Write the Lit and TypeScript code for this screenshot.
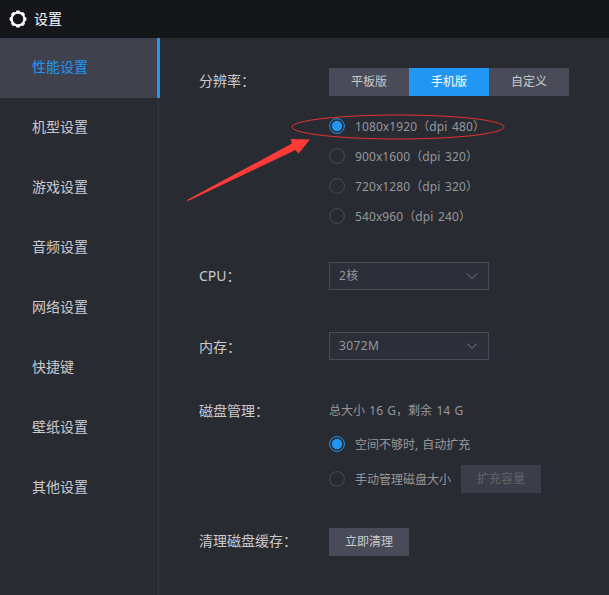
import { LitElement, html, css, svg } from "lit";
import { customElement, property, state } from "lit/decorators.js";
import { classMap } from "lit/directives/class-map.js";

@customElement("radio-option")
class RadioOption extends LitElement {
  @property({ type: Boolean }) checked = false;
  @property() label = "";
  static styles = css`
    :host { display: flex; align-items: center; height: 30px; font-size: 12px; color: #95979b; white-space: nowrap; cursor: pointer; }
    .dot { box-sizing: border-box; width: 16px; height: 16px; margin-right: 10px; flex: none; }
    .ring { fill: none; stroke: #494c58; }
    .on .ring { stroke: #2196f3; }
    .core { fill: #2196f3; }
    .text { padding-top: 1px; }
  `;
  render() {
    return html`<svg class="dot ${this.checked ? "on" : ""}" viewBox="0 0 16 16">
        <circle class="ring" cx="8" cy="8" r="7.4"></circle>
        ${this.checked ? svg`<circle class="core" cx="8" cy="8" r="5.2"></circle>` : ""}
      </svg><span class="text">${this.label}</span>`;
  }
}

@customElement("select-box")
class SelectBox extends LitElement {
  @property() value = "";
  static styles = css`
    :host { box-sizing: border-box; display: flex; align-items: center; justify-content: space-between; width: 160px; height: 28px; padding: 0 10px 0 9px; border: 1px solid #494c58; background: #2d2f38; color: #95979b; font-size: 12px; letter-spacing: 0.4px; }
    svg { width: 12px; height: 8px; fill: none; stroke: #777a82; }
  `;
  render() {
    return html`<span>${this.value}</span><svg viewBox="0 0 12 8"><path d="M1 1.5 6 6.5 11 1.5"></path></svg>`;
  }
}

@customElement("app-root")
class AppRoot extends LitElement {
  @state() active = 0;
  @state() mode = 1;
  @state() resolution = 0;
  @state() disk = 0;
  menu = ["性能设置", "机型设置", "游戏设置", "音频设置", "网络设置", "快捷键", "壁纸设置", "其他设置"];
  modes = ["平板版", "手机版", "自定义"];
  sizes = ["1080x1920（dpi 480）", "900x1600（dpi 320）", "720x1280（dpi 320）", "540x960（dpi 240）"];
  diskModes = ["空间不够时, 自动扩充", "手动管理磁盘大小"];

  static styles = css`
    :host { box-sizing: border-box; display: flex; flex-direction: column; position: relative; width: 609px; height: 595px; overflow: hidden; background: #292b32; color: #c9cacc; font: 14px/20px "Noto Sans", "Noto Sans CJK SC", sans-serif; }
    header { display: flex; align-items: center; height: 38px; padding-left: 9px; background: #15161a; color: #fff; }
    header span { padding-bottom: 1px; }
    .gear { width: 18px; height: 18px; margin-right: 7px; }
    .body { display: flex; flex: 1; }
    nav { box-sizing: border-box; width: 159px; border-right: 1px solid #363841; }
    .item { box-sizing: border-box; display: flex; align-items: center; height: 60px; padding: 0 0 2px 32px; cursor: pointer; }
    .item.active { width: 160px; border-right: 3px solid #2196f3; background: #3f424d; color: #2196f3; }
    main { flex: 1; padding: 30px 0 0 40px; }
    .row { display: grid; grid-template-columns: 130px auto; justify-content: start; align-items: start; }
    .label { line-height: 26px; white-space: nowrap; }
    .tabs { display: flex; margin-bottom: 15px; }
    .size { letter-spacing: 0.1px; word-spacing: 1.4px; }
    .btn { width: 80px; height: 28px; box-sizing: border-box; background: #494c58; font-size: 12px; line-height: 27px; text-align: center; }
    .btn.active { background: #2196f3; color: #fff; }
    .btn.off { margin-left: 10px; background: #3b3e48; color: #62656e; }
    .cpu { margin-top: 31px; }
    .cpu .label, .mem .label { line-height: 28px; }
    .mem { margin-top: 42px; }
    .mem .label { padding-top: 1px; }
    .disk { margin-top: 37px; }
    .info { font-size: 12px; line-height: 26px; color: #95979b; margin-bottom: 5px; word-spacing: 1.2px; }
    .auto { word-spacing: 1px; }
    .manual { display: flex; align-items: center; margin-top: 5px; }
    .clean { margin-top: 34px; }
    .note { position: absolute; left: 0; top: 0; width: 609px; height: 595px; pointer-events: none; }
  `;

  render() {
    return html`
      <header>
        <svg class="gear" viewBox="0 0 18 18">
          ${Array.from({ length: 8 }, (_, i) => svg`<rect x="7" y="0.6" width="4" height="3" rx="1" fill="#fff" transform="rotate(${i * 45} 9 9)"></rect>`)}
          <circle cx="9" cy="9" r="6.4" fill="none" stroke="#fff" stroke-width="2"></circle>
        </svg>
        <span>设置</span>
      </header>
      <div class="body">
        <nav>
          ${this.menu.map((m, i) => html`<div class=${classMap({ item: true, active: i === this.active })} @click=${() => (this.active = i)}>${m}</div>`)}
        </nav>
        <main>
          <section class="row">
            <div class="label">分辨率：</div>
            <div>
              <div class="tabs">
                ${this.modes.map((m, i) => html`<div class=${classMap({ btn: true, active: i === this.mode })} @click=${() => (this.mode = i)}>${m}</div>`)}
              </div>
              ${this.sizes.map((s, i) => html`<radio-option class="size" .label=${s} .checked=${i === this.resolution} @click=${() => (this.resolution = i)}></radio-option>`)}
            </div>
          </section>
          <section class="row cpu"><div class="label">CPU：</div><select-box value="2核"></select-box></section>
          <section class="row mem"><div class="label">内存：</div><select-box value="3072M"></select-box></section>
          <section class="row disk">
            <div class="label">磁盘管理：</div>
            <div>
              <div class="info">总大小 16 G，剩余 14 G</div>
              <radio-option class="auto" .label=${this.diskModes[0]} .checked=${this.disk === 0} @click=${() => (this.disk = 0)}></radio-option>
              <div class="manual">
                <radio-option .label=${this.diskModes[1]} .checked=${this.disk === 1} @click=${() => (this.disk = 1)}></radio-option>
                <div class="btn off">扩充容量</div>
              </div>
            </div>
          </section>
          <section class="row clean"><div class="label">清理磁盘缓存：</div><div class="btn">立即清理</div></section>
        </main>
      </div>
      <svg class="note" viewBox="0 0 609 595">
        <ellipse cx="398" cy="127" rx="106" ry="12" fill="none" stroke="#e8302f" stroke-width="1"></ellipse>
        <path d="M187 200 292 143.500 290.500 139 310 139.500 298.500 153.500 295.500 150 188 201Z" fill="#ff3b38"></path>
      </svg>
    `;
  }
}
